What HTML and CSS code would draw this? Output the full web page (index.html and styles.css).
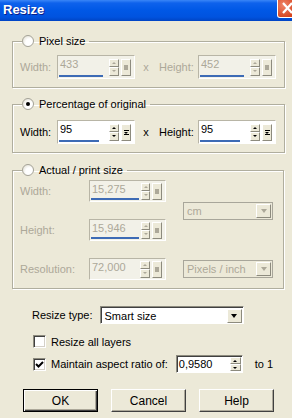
FILE: index.html
```html
<!DOCTYPE html>
<html lang="en">
<head>
  <meta charset="UTF-8" />
  <title>Resize</title>
  <link rel="stylesheet" href="styles.css">
</head>
<body>
  <div class="window">
    <div class="titlebar">
      <span class="title">Resize</span>
      <span class="close">
        <svg width="21" height="21" viewBox="0 0 21 21"><path d="M6 5 L15 15 M15 5 L6 15" stroke="#fff" stroke-width="2.2" fill="none"/></svg>
      </span>
    </div>

    <div class="content">
      <fieldset class="group g1">
        <legend><span class="radio"></span>Pixel size</legend>
        <div class="row dis">
          <span class="lbl w">Width:</span>
          <div class="spin">
            <div class="field"><span class="val">433</span><i class="bar" style="width:44px"></i></div>
            <div class="arrows"><b class="up"></b><b class="dn"></b></div>
            <div class="pop"><b class="sq"></b></div>
          </div>
          <span class="times">x</span>
          <span class="lbl h">Height:</span>
          <div class="spin">
            <div class="field"><span class="val">452</span><i class="bar" style="width:44px"></i></div>
            <div class="arrows"><b class="up"></b><b class="dn"></b></div>
            <div class="pop"><b class="sq"></b></div>
          </div>
        </div>
      </fieldset>

      <fieldset class="group g2">
        <legend><span class="radio on"></span>Percentage of original</legend>
        <div class="row">
          <span class="lbl w">Width:</span>
          <div class="spin on">
            <div class="field"><span class="val">95</span><i class="bar" style="width:40px"></i></div>
            <div class="arrows"><b class="up"></b><b class="dn"></b></div>
            <div class="pop"><b class="down-bar"></b></div>
          </div>
          <span class="times">x</span>
          <span class="lbl h">Height:</span>
          <div class="spin on">
            <div class="field"><span class="val">95</span><i class="bar" style="width:40px"></i></div>
            <div class="arrows"><b class="up"></b><b class="dn"></b></div>
            <div class="pop"><b class="down-bar"></b></div>
          </div>
        </div>
      </fieldset>

      <fieldset class="group g3">
        <legend><span class="radio"></span>Actual / print size</legend>
        <div class="print dis">
          <span class="lbl">Width:</span>
          <div class="spin">
            <div class="field"><span class="val">15,275</span><i class="bar" style="width:48px"></i></div>
            <div class="arrows"><b class="up"></b><b class="dn"></b></div>
            <div class="pop"><b class="sq"></b></div>
          </div>
          <div class="combo unit"><span>cm</span><i class="drop"><b></b></i></div>
          <span class="lbl">Height:</span>
          <div class="spin">
            <div class="field"><span class="val">15,946</span><i class="bar" style="width:48px"></i></div>
            <div class="arrows"><b class="up"></b><b class="dn"></b></div>
            <div class="pop"><b class="sq"></b></div>
          </div>
          <span class="lbl">Resolution:</span>
          <div class="spin">
            <div class="field"><span class="val">72,000</span></div>
            <div class="arrows"><b class="up"></b><b class="dn"></b></div>
            <div class="pop"><b class="sq"></b></div>
          </div>
          <div class="combo"><span>Pixels / inch</span><i class="drop"><b></b></i></div>
        </div>
      </fieldset>

      <div class="type-row">
        <span>Resize type:</span>
        <div class="combo live"><span>Smart size</span><i class="drop"><b></b></i></div>
      </div>

      <label class="check"><span class="box"></span>Resize all layers</label>
      <div class="ratio-row">
        <label class="check"><span class="box">
          <svg width="9" height="9" viewBox="0 0 9 9"><path d="M1 4 L3.5 6.5 L8 2" stroke="#000" stroke-width="2" fill="none"/></svg>
        </span>Maintain aspect ratio of:</label>
        <div class="ratio">
          <span>0,9580</span>
          <div class="arrows"><b class="up"></b><b class="dn"></b></div>
        </div>
        <span class="to">to 1</span>
      </div>

      <div class="buttons">
        <button class="btn default">OK</button>
        <button class="btn">Cancel</button>
        <button class="btn">Help</button>
      </div>
    </div>
  </div>
</body>
</html>
```

FILE: styles.css
```css
* { margin: 0; padding: 0; box-sizing: border-box; }
html, body { width: 292px; height: 418px; overflow: hidden; }
body {
  background: #ece9d8;
  font-family: 'Liberation Sans', Arial, sans-serif;
  font-size: 11px;
  color: #000;
}
.window { width: 292px; height: 418px; }

.titlebar {
  height: 21px;
  display: flex;
  justify-content: space-between;
  align-items: flex-start;
  overflow: hidden;
  background: linear-gradient(#3a86f7 0, #0e62ec 3px, #0058e6 10px, #0053df 17px, #0044c4 21px);
}
.title {
  color: #fff;
  font-weight: bold;
  font-size: 13px;
  line-height: 19px;
  padding-left: 3px;
  text-shadow: 1px 1px 0 #0a1e8a;
}
.close {
  width: 21px;
  height: 18px;
  margin-right: -6px;
  border: 1px solid #fff;
  border-top: 0;
  border-radius: 0 0 0 3px;
  background: radial-gradient(circle at 30% 30%, #f0866b, #d6451f 70%);
  overflow: hidden;
}
.close svg { display: block; margin-top: -2px; margin-left: -1px; }

.content { padding: 13px 8px 0 12px; }

.group {
  border: 1px solid #b0ae9e;
  box-shadow: 1px 1px 0 #fff, inset 1px 1px 0 #fff;
  padding: 0 8px 8px 7px;
  width: 272px;
}
.g2 { margin-top: 9px; }
.g3 { margin-top: 10px; padding-bottom: 8px; }
legend {
  display: flex;
  align-items: center;
  gap: 5px;
  height: 14px;
  line-height: 14px;
  margin-left: 2px;
  padding: 0 4px 0 0;
}
.radio {
  width: 12px;
  height: 12px;
  border-radius: 50%;
  border: 1px solid #a4a297;
  background: radial-gradient(circle at 65% 65%, #fff 40%, #e6e4da 80%);
  display: flex;
  align-items: center;
  justify-content: center;
}
.radio.on::after {
  content: "";
  width: 4px;
  height: 4px;
  border-radius: 50%;
  background: #000;
}

.row {
  display: flex;
  align-items: center;
  margin-top: 7px;
}
.g2 .row { margin-top: 9px; }
.lbl.w { width: 37px; }
.lbl.h { width: 39px; }
.times { width: 24px; text-align: center; padding-right: 2px; }
.dis { color: #aca899; }

.spin {
  display: flex;
  align-items: center;
  gap: 2px;
  width: 78px;
  height: 24px;
  padding: 0 3px 0 1px;
  border: 1px solid;
  border-color: #b8b5a6 #fff #fff #b8b5a6;
  background: #f2f1e8;
}
.spin.on { background: #fff; }
.field {
  flex: 1;
  align-self: stretch;
  display: flex;
  flex-direction: column;
  padding-top: 2px;
}
.val { line-height: 13px; padding-left: 1px; }
.bar {
  display: block;
  height: 2px;
  margin-top: auto;
  margin-bottom: 1px;
  background: #3d6bb5;
}
.arrows {
  width: 10px;
  height: 17px;
  display: flex;
  flex-direction: column;
}
.arrows b, .pop {
  border: 1px solid;
  border-color: #fff #8d8b7e #8d8b7e #fff;
  background: #ece9d8;
  display: flex;
  align-items: center;
  justify-content: center;
}
.arrows b { flex: 1; }
.arrows .up::after, .arrows .dn::after {
  content: "";
  border-left: 2px solid transparent;
  border-right: 2px solid transparent;
}
.arrows .up::after { border-bottom: 2px solid #000; }
.arrows .dn::after { border-top: 2px solid #000; }
.dis .arrows .up::after { border-bottom-color: #aca899; }
.dis .arrows .dn::after { border-top-color: #aca899; }
.pop { width: 10px; height: 17px; }
.pop .sq { width: 4px; height: 5px; background: #aca899; }
.pop .down-bar {
  width: 5px;
  height: 5px;
  border-top: 1px solid #000;
  border-bottom: 1px solid #000;
  position: relative;
}
.pop .down-bar::after {
  content: "";
  position: absolute;
  left: 0;
  top: 1px;
  border-left: 2.5px solid transparent;
  border-right: 2.5px solid transparent;
  border-top: 2px solid #000;
}

.print {
  display: grid;
  grid-template-columns: 69px 77px 17px 90px;
  grid-template-rows: 22px 22px 22px;
  row-gap: 17px;
  align-items: center;
  margin-top: 3px;
}
.print .lbl { grid-column: 1; }
.print .spin { grid-column: 2; width: 77px; height: 22px; }
.print .unit { grid-column: 4; grid-row: 1 / span 2; }
.print .combo { grid-column: 4; }

.combo {
  height: 18px;
  display: flex;
  align-items: center;
  justify-content: space-between;
  border: 1px solid #a8a69a;
  background: #ece9d8;
  padding: 0 1px 0 3px;
}
.combo .drop {
  width: 15px;
  height: 14px;
  border: 1px solid;
  border-color: #fff #8d8b7e #8d8b7e #fff;
  display: flex;
  align-items: center;
  justify-content: center;
}
.combo .drop b {
  border-left: 3.5px solid transparent;
  border-right: 3.5px solid transparent;
  border-top: 4px solid #aca899;
}
.combo.live {
  width: 144px;
  background: #fff;
  border-color: #8d8b7e #fff #fff #8d8b7e;
  box-shadow: inset 1px 1px 0 #404040;
  padding: 1px 1px 0 4px;
  color: #000;
}
.combo.live .drop { background: #ece9d8; }
.combo.live .drop b { border-top-color: #000; }

.type-row {
  display: flex;
  align-items: center;
  gap: 7px;
  margin: 17px 0 0 20px;
}
.check {
  display: flex;
  align-items: center;
  gap: 5px;
  margin-left: 21px;
}
.type-row + .check { margin-top: 11px; }
.box {
  width: 13px;
  height: 13px;
  background: #fff;
  border: 1px solid;
  border-color: #8d8b7e #fff #fff #8d8b7e;
  box-shadow: inset 1px 1px 0 #404040, inset -1px -1px 0 #d4d0c8;
  display: flex;
  align-items: center;
  justify-content: center;
}
.ratio-row {
  display: flex;
  align-items: center;
  margin-top: 7px;
}
.ratio {
  margin-left: 8px;
  width: 67px;
  height: 18px;
  display: flex;
  align-items: center;
  justify-content: space-between;
  background: #fff;
  border: 1px solid;
  border-color: #8d8b7e #fff #fff #8d8b7e;
  box-shadow: inset 1px 1px 0 #404040;
  padding: 0 1px 0 2px;
}
.ratio .arrows { height: 14px; width: 11px; }
.to { margin-left: 12px; }

.buttons {
  display: flex;
  gap: 13px;
  margin: 16px 0 0 11px;
}
.btn {
  width: 75px;
  height: 23px;
  font: inherit;
  font-size: 12px;
  background: #ece9d8;
  border: 1px solid;
  border-color: #fff #404040 #404040 #fff;
  box-shadow: inset -1px -1px 0 #aca899;
}
.btn.default {
  border: 1px solid #000;
  box-shadow: inset 1px 1px 0 #fff, inset -1px -1px 0 #404040, inset -2px -2px 0 #aca899;
}
```
